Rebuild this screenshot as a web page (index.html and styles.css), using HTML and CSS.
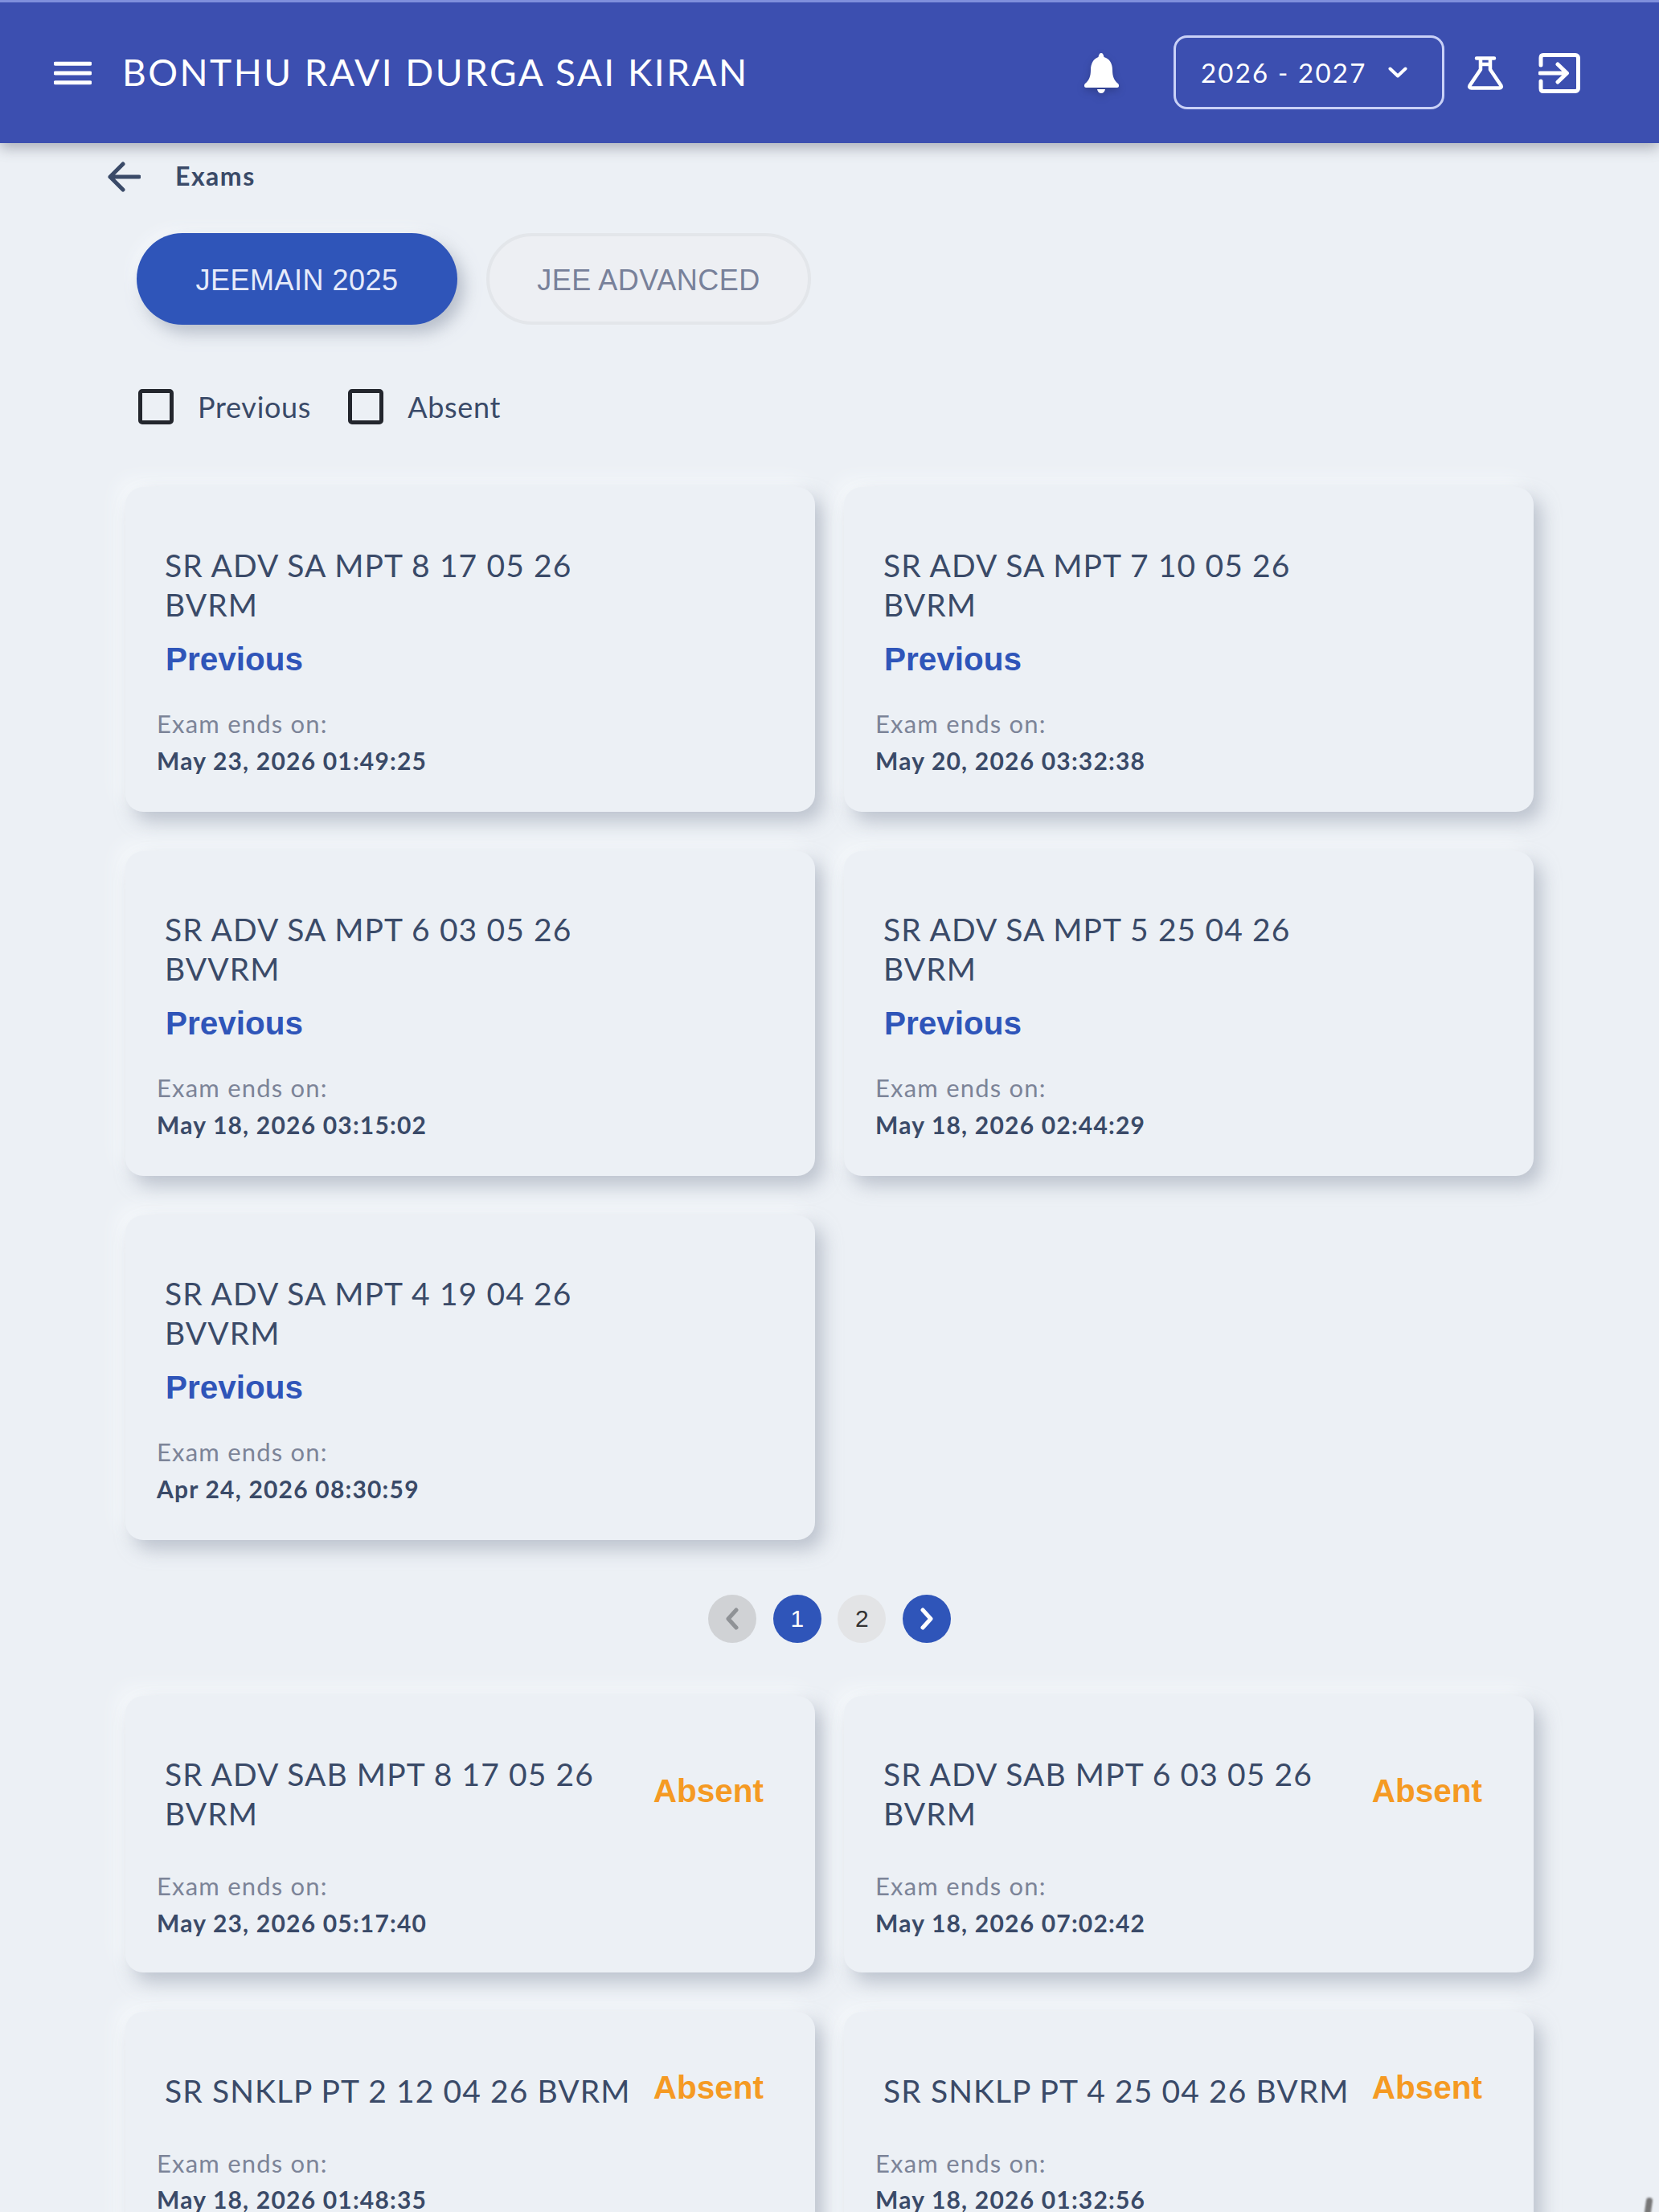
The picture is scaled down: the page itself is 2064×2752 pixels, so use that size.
FILE: index.html
```html
<!DOCTYPE html>
<html lang="en">

<head>
    <meta charset="UTF-8">
    <meta name="viewport" content="width=device-width, initial-scale=1.0">
    <title>Exams</title>

    <link rel="stylesheet" href="styles.css">
</head>

<body>

    <div class="header">
        <svg class="menuIcon" viewBox="0 0 48 32"><path d="M2 4h44M2 16h44M2 28h44" /></svg>
        <p class="studentName">BONTHU RAVI DURGA SAI KIRAN</p>

        <svg class="bellIcon" viewBox="0 0 44 50"><path d="M22 0c2 0 3 2 3.500 5 7 2 10.500 8 10.500 16 0 8 2 13 7 17 1 1 1 2 1 3 0 1-1 2-2 2H3c-1 0-2-1-2-2 0-1 0-2 1-3 5-4 7-9 7-17 0-8 3.500-14 9.500-16C19 2 20 0 22 0zM17 45h10c-.5 3-2.500 5-5 5s-4.500-2-5-5z" /></svg>

        <div class="yearSelect">
            <span>2026 - 2027</span>
            <svg class="chevron" viewBox="0 0 24 14"><path d="M2.500 2.500L12 11.500l9.500-9" /></svg>
        </div>

        <svg class="flaskIcon" viewBox="0 0 46 42"><path d="M12 2.500h22M17 2.500v14L3.500 36.500c-.8 1.500 0 3 2 3h35c2 0 2.800-1.500 2-3L29 16.500v-14M17 10h12" /></svg>
        <svg class="exitIcon" viewBox="0 0 52 50"><path d="M3 15V6c0-2 1-3.500 3-3.500h40c2 0 3.500 1.500 3.500 3.500v38c0 2-1.500 3.500-3.500 3.500H6c-2 0-3-1.500-3-3.500v-9M2 25h33M24 14l11.500 11L24 36" /></svg>
    </div>

    <div class="crumb">
        <svg class="backIcon" viewBox="0 0 42 38"><path d="M40 19H4M20 3L4 19l16 16" /></svg>
        <span>Exams</span>
    </div>

    <div class="tabs">
        <button class="tab active">JEEMAIN 2025</button>
        <button class="tab">JEE ADVANCED</button>
    </div>

    <div class="filters">
        <label class="filter"><span class="box"></span>Previous</label>
        <label class="filter"><span class="box"></span>Absent</label>
    </div>

    <!-- previous exams -->
    <div class="cardGrid">
        <div class="card">
            <p class="examName">SR ADV SA MPT 8 17 05 26<br>BVRM</p>
            <p class="status previous">Previous</p>
            <p class="endsLabel">Exam ends on:</p>
            <p class="endsDate">May 23, 2026 01:49:25</p>
        </div>
        <div class="card">
            <p class="examName">SR ADV SA MPT 7 10 05 26<br>BVRM</p>
            <p class="status previous">Previous</p>
            <p class="endsLabel">Exam ends on:</p>
            <p class="endsDate">May 20, 2026 03:32:38</p>
        </div>
        <div class="card">
            <p class="examName">SR ADV SA MPT 6 03 05 26<br>BVVRM</p>
            <p class="status previous">Previous</p>
            <p class="endsLabel">Exam ends on:</p>
            <p class="endsDate">May 18, 2026 03:15:02</p>
        </div>
        <div class="card">
            <p class="examName">SR ADV SA MPT 5 25 04 26<br>BVRM</p>
            <p class="status previous">Previous</p>
            <p class="endsLabel">Exam ends on:</p>
            <p class="endsDate">May 18, 2026 02:44:29</p>
        </div>
        <div class="card">
            <p class="examName">SR ADV SA MPT 4 19 04 26<br>BVVRM</p>
            <p class="status previous">Previous</p>
            <p class="endsLabel">Exam ends on:</p>
            <p class="endsDate">Apr 24, 2026 08:30:59</p>
        </div>
    </div>

    <div class="pager">
        <span class="page disabled"><svg viewBox="0 0 18 28"><path d="M14 3L4 14l10 11" /></svg></span>
        <span class="page current">1</span>
        <span class="page">2</span>
        <span class="page current"><svg viewBox="0 0 18 28"><path d="M4 3l10 11L4 25" /></svg></span>
    </div>

    <!-- absent exams -->
    <div class="cardGrid absentGrid">
        <div class="card">
            <div class="cardTop">
                <p class="examName">SR ADV SAB MPT 8 17 05 26<br>BVRM</p>
                <p class="status absent">Absent</p>
            </div>
            <p class="endsLabel">Exam ends on:</p>
            <p class="endsDate">May 23, 2026 05:17:40</p>
        </div>
        <div class="card">
            <div class="cardTop">
                <p class="examName">SR ADV SAB MPT 6 03 05 26<br>BVRM</p>
                <p class="status absent">Absent</p>
            </div>
            <p class="endsLabel">Exam ends on:</p>
            <p class="endsDate">May 18, 2026 07:02:42</p>
        </div>
        <div class="card">
            <div class="cardTop">
                <p class="examName">SR SNKLP PT 2 12 04 26 BVRM</p>
                <p class="status absent">Absent</p>
            </div>
            <p class="endsLabel">Exam ends on:</p>
            <p class="endsDate">May 18, 2026 01:48:35</p>
        </div>
        <div class="card">
            <div class="cardTop">
                <p class="examName">SR SNKLP PT 4 25 04 26 BVRM</p>
                <p class="status absent">Absent</p>
            </div>
            <p class="endsLabel">Exam ends on:</p>
            <p class="endsDate">May 18, 2026 01:32:56</p>
        </div>
    </div>

    <div class="cornerMark"></div>

</body>
</html>
```

FILE: styles.css
```css
p {
    margin: 0;
    padding: 0;
}

html {
    height: 2752px;
    overflow: hidden;
}

body {
    margin: 0;
    height: 2752px;
    overflow: hidden;
    background-color: #ecf0f5;
    font-family: "Lato", "Noto Sans", sans-serif;
    color: #3a4a68;
}

svg {
    fill: none;
    stroke: currentColor;
    stroke-linecap: round;
    stroke-linejoin: round;
    display: block;
}

.header {
    height: 175px;
    display: flex;
    align-items: center;
    padding-left: 67px;
    background-color: #3c4fb0;
    border-top: 3px solid #7f8fdc;
    box-shadow: 0 6px 16px rgba(90, 95, 110, 0.45);
    color: white;
}

.menuIcon {
    width: 47px;
    height: 32px;
    stroke-width: 5;
    margin-right: 38px;
}

.studentName {
    width: 1196px;
    margin-top: -2px;
    font-size: 46px;
    letter-spacing: 2.450px;
    white-space: nowrap;
}

.bellIcon {
    width: 44px;
    height: 50px;
    fill: white;
    stroke: none;
    margin-right: 68px;
    filter: drop-shadow(0 4px 5px rgba(30, 40, 90, 0.4));
}

.yearSelect {
    width: 337px;
    height: 92px;
    box-sizing: border-box;
    display: flex;
    align-items: center;
    padding-left: 31px;
    margin-top: -2px;
    border: 3px solid #c9d1f7;
    border-radius: 17px;
    font-size: 33px;
    letter-spacing: 2.2px;
}

.chevron {
    width: 24px;
    height: 14px;
    stroke-width: 4;
    margin-left: 27px;
}

.flaskIcon {
    width: 46px;
    height: 42px;
    stroke-width: 4.500;
    margin-left: 28px;
}

.exitIcon {
    width: 52px;
    height: 50px;
    stroke-width: 5;
    margin-left: 43px;
}

.crumb {
    height: 80px;
    display: flex;
    align-items: center;
    padding-left: 133px;
    font-size: 32px;
    font-weight: 700;
    letter-spacing: 1.5px;
}

.backIcon {
    width: 42px;
    height: 38px;
    stroke-width: 5;
    margin: 3px 43px 0 0;
}

.tabs {
    display: flex;
    gap: 36px;
    padding: 32px 0 0 170px;
}

.tab {
    height: 114px;
    padding-top: 4px;
    border-radius: 57px;
    font-family: "Liberation Sans", sans-serif;
    font-size: 36px;
    letter-spacing: 0.5px;
}

.tab.active {
    width: 399px;
    border: none;
    background-color: #2f55b9;
    color: #e6ebfa;
    box-shadow: 8px 10px 20px rgba(160, 168, 182, 0.7), -6px -6px 14px #f5f8fb;
}

.tab:not(.active) {
    width: 404px;
    border: 4px solid #e3e6ea;
    background-color: #edeff3;
    color: #78819a;
}

.filters {
    display: flex;
    gap: 46px;
    padding: 80px 0 0 172px;
}

.filter {
    display: flex;
    align-items: center;
    gap: 30px;
    font-size: 36px;
    letter-spacing: 0.7px;
}

.box {
    width: 44px;
    height: 44px;
    box-sizing: border-box;
    border: 5px solid #23262d;
    border-radius: 5px;
}

.cardGrid {
    display: grid;
    grid-template-columns: 858px 858px;
    column-gap: 36px;
    row-gap: 49px;
    padding: 78px 0 0 156px;
}

.card {
    box-sizing: border-box;
    height: 404px;
    padding: 73px 49px 0 39px;
    border-radius: 22px;
    background-color: #ecf0f5;
    box-shadow: 10px 12px 22px rgba(160, 168, 182, 0.62), -10px -10px 20px #f5f8fb;
}

.examName {
    padding-left: 10px;
    font-size: 39px;
    line-height: 49px;
    letter-spacing: 1.1px;
    white-space: nowrap;
}

.status {
    font-family: "Liberation Sans", sans-serif;
    font-weight: 700;
    font-size: 40.500px;
}

.status.previous {
    padding: 20px 0 0 11px;
    height: 46px;
    color: #2f55b9;
}

.status.absent {
    padding-bottom: 7px;
    color: #f59a23;
}

.endsLabel {
    margin-top: 37px;
    font-size: 31px;
    line-height: 40px;
    letter-spacing: 1.2px;
    color: #7c8498;
}

.endsDate {
    margin-top: 6px;
    font-size: 30px;
    line-height: 40px;
    font-weight: 700;
    letter-spacing: 1.2px;
}

.pager {
    display: flex;
    justify-content: center;
    gap: 20.500px;
    padding: 68px 0 0 0;
}

.page {
    width: 60px;
    height: 60px;
    display: flex;
    align-items: center;
    justify-content: center;
    border-radius: 50%;
    background-color: #e3e4e6;
    font-family: "Liberation Sans", sans-serif;
    font-size: 30px;
    color: #333;
}

.page svg {
    width: 18px;
    height: 28px;
    stroke-width: 5;
}

.page.current {
    background-color: #2f55b9;
    color: white;
}

.page.disabled {
    background-color: #d0d2d5;
    color: #8f9296;
}

.absentGrid {
    padding-top: 66px;
}

.absentGrid .card {
    height: 344px;
}

.absentGrid .card:nth-child(n+3) {
    height: 295px;
    padding-top: 71px;
}

.cardTop {
    display: flex;
    justify-content: space-between;
    align-items: center;
    padding-right: 15px;
}

.absentGrid .endsLabel {
    margin-top: 45px;
}

.absentGrid .card:nth-child(n+3) .endsLabel {
    margin-top: 43px;
}

.absentGrid .card:nth-child(n+3) .endsDate {
    margin-top: 5px;
}

/* dark smudge in the bottom right corner */
.cornerMark {
    position: fixed;
    right: 9px;
    bottom: -4px;
    width: 8px;
    height: 22px;
    border-radius: 4px;
    background-color: #777;
    transform: rotate(8deg);
    filter: blur(1px);
}
```
